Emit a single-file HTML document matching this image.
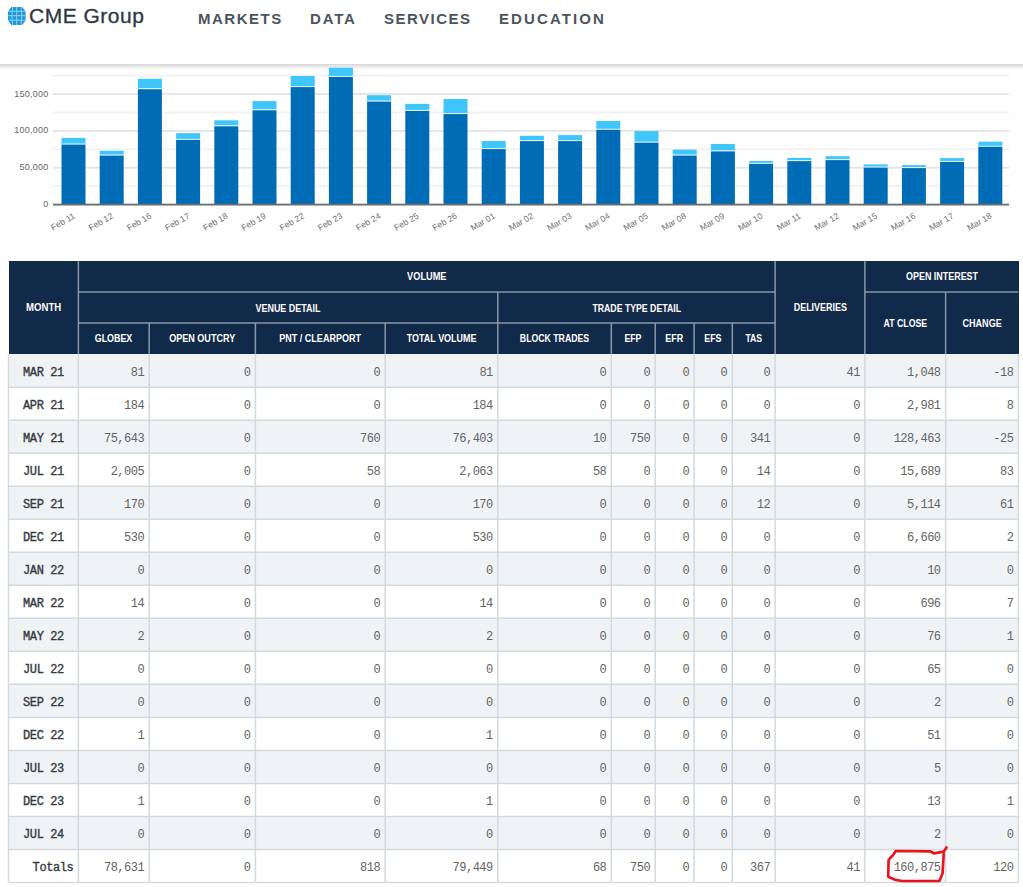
<!DOCTYPE html>
<html><head><meta charset="utf-8"><style>
html,body{margin:0;padding:0;background:#fff;width:1023px;height:887px;overflow:hidden;position:relative}
body{font-family:"Liberation Sans",sans-serif}
.r{position:absolute}
.shadow{position:absolute;left:0;top:64px;width:1023px;height:6px;background:linear-gradient(#d6d6d6,#e6e6e6 35%,#f8f8f8 75%,#fff)}
.logo{position:absolute;left:29px;top:3.8px;font-size:21px;color:#2f3a44;letter-spacing:0.5px;white-space:nowrap;-webkit-text-stroke:0.35px #2f3a44}
.globe{position:absolute;left:7.7px;top:7px}
.nav{position:absolute;top:10px;font-size:15px;font-weight:bold;color:#4b5560;white-space:nowrap}
.chart{position:absolute;left:0;top:60px}
.yl{font-size:9px;letter-spacing:0.25px;fill:#666;font-family:"Liberation Sans",sans-serif}
.xl{font-size:8.6px;fill:#707070;font-family:"Liberation Sans",sans-serif}
.ht{position:absolute;color:#fff;font-size:10.2px;font-weight:bold;text-align:center;white-space:nowrap;padding-top:1.3px;box-sizing:border-box}
.bt{position:absolute;font-family:"Liberation Mono",monospace;font-size:12px;letter-spacing:-0.5px;white-space:nowrap;box-sizing:border-box;padding-top:3px}
.bt.n{text-align:right;padding-right:5px;color:#636363}
.bt.m{text-align:center;font-weight:normal;color:#353a40;-webkit-text-stroke:0.35px #353a40;letter-spacing:-0.4px}
.bt.m.tot{text-align:right;padding-right:5px}
.circ{position:absolute;left:0;top:0}
</style></head><body>
<svg class="globe" width="19" height="19" viewBox="0 0 19 19"><defs><clipPath id="gc"><polygon points="3.2,0 14.4,0 17.6,4.7 17.6,13.3 14.4,18 3.2,18 0,13.3 0,4.7"/></clipPath><clipPath id="gc2"><circle cx="8.8" cy="9" r="10.6"/></clipPath></defs><g clip-path="url(#gc)"><g clip-path="url(#gc2)"><rect width="19" height="19" fill="#1b9ad7"/><g stroke="#9fd3f1" stroke-width="0.9" fill="none"><line x1="0" y1="4.3" x2="18" y2="4.3"/><line x1="0" y1="8.7" x2="18" y2="8.7"/><line x1="0" y1="13.2" x2="18" y2="13.2"/><path d="M8.7,0 L8.7,18"/><path d="M4.6,0 Q3,9 4.6,18"/><path d="M13,0 Q14.6,9 13,18"/></g></g></g></svg>
<div class="logo">CME Group</div>
<div class="nav" style="left:198px;letter-spacing:1.5px">MARKETS</div>
<div class="nav" style="left:310px;letter-spacing:1.8px">DATA</div>
<div class="nav" style="left:384px;letter-spacing:1.5px">SERVICES</div>
<div class="nav" style="left:499px;letter-spacing:2.1px">EDUCATION</div>
<div class="shadow"></div>
<svg class="chart" width="1023" height="190" viewBox="0 60 1023 190">
<rect x="53" y="185.27" width="956" height="1.8" fill="#f1f1f1"/>
<rect x="53" y="166.84" width="956" height="1.8" fill="#e3e3e3"/>
<rect x="53" y="148.41" width="956" height="1.8" fill="#f1f1f1"/>
<rect x="53" y="129.98" width="956" height="1.8" fill="#e3e3e3"/>
<rect x="53" y="111.55" width="956" height="1.8" fill="#f1f1f1"/>
<rect x="53" y="93.12" width="956" height="1.8" fill="#e3e3e3"/>
<rect x="53" y="74.69" width="956" height="1.8" fill="#f1f1f1"/>
<rect x="61.50" y="137.90" width="24" height="6.10" fill="#3ec6fd"/>
<rect x="61.50" y="143.50" width="24" height="1.1" fill="#e2f4fc"/>
<rect x="61.50" y="144.60" width="24" height="60.00" fill="#006cb5"/>
<rect x="99.70" y="150.80" width="24" height="4.20" fill="#3ec6fd"/>
<rect x="99.70" y="154.50" width="24" height="1.1" fill="#e2f4fc"/>
<rect x="99.70" y="155.60" width="24" height="49.00" fill="#006cb5"/>
<rect x="137.90" y="78.80" width="24" height="9.80" fill="#3ec6fd"/>
<rect x="137.90" y="88.10" width="24" height="1.1" fill="#e2f4fc"/>
<rect x="137.90" y="89.20" width="24" height="115.40" fill="#006cb5"/>
<rect x="176.10" y="133.20" width="24" height="6.10" fill="#3ec6fd"/>
<rect x="176.10" y="138.80" width="24" height="1.1" fill="#e2f4fc"/>
<rect x="176.10" y="139.90" width="24" height="64.70" fill="#006cb5"/>
<rect x="214.30" y="120.30" width="24" height="5.40" fill="#3ec6fd"/>
<rect x="214.30" y="125.20" width="24" height="1.1" fill="#e2f4fc"/>
<rect x="214.30" y="126.30" width="24" height="78.30" fill="#006cb5"/>
<rect x="252.50" y="101.10" width="24" height="8.60" fill="#3ec6fd"/>
<rect x="252.50" y="109.20" width="24" height="1.1" fill="#e2f4fc"/>
<rect x="252.50" y="110.30" width="24" height="94.30" fill="#006cb5"/>
<rect x="290.70" y="76.00" width="24" height="10.50" fill="#3ec6fd"/>
<rect x="290.70" y="86.00" width="24" height="1.1" fill="#e2f4fc"/>
<rect x="290.70" y="87.10" width="24" height="117.50" fill="#006cb5"/>
<rect x="328.90" y="67.70" width="24" height="8.70" fill="#3ec6fd"/>
<rect x="328.90" y="75.90" width="24" height="1.1" fill="#e2f4fc"/>
<rect x="328.90" y="77.00" width="24" height="127.60" fill="#006cb5"/>
<rect x="367.10" y="95.20" width="24" height="5.80" fill="#3ec6fd"/>
<rect x="367.10" y="100.50" width="24" height="1.1" fill="#e2f4fc"/>
<rect x="367.10" y="101.60" width="24" height="103.00" fill="#006cb5"/>
<rect x="405.30" y="103.90" width="24" height="6.50" fill="#3ec6fd"/>
<rect x="405.30" y="109.90" width="24" height="1.1" fill="#e2f4fc"/>
<rect x="405.30" y="111.00" width="24" height="93.60" fill="#006cb5"/>
<rect x="443.50" y="99.00" width="24" height="14.50" fill="#3ec6fd"/>
<rect x="443.50" y="113.00" width="24" height="1.1" fill="#e2f4fc"/>
<rect x="443.50" y="114.10" width="24" height="90.50" fill="#006cb5"/>
<rect x="481.70" y="141.00" width="24" height="7.50" fill="#3ec6fd"/>
<rect x="481.70" y="148.00" width="24" height="1.1" fill="#e2f4fc"/>
<rect x="481.70" y="149.10" width="24" height="55.50" fill="#006cb5"/>
<rect x="519.90" y="135.80" width="24" height="4.70" fill="#3ec6fd"/>
<rect x="519.90" y="140.00" width="24" height="1.1" fill="#e2f4fc"/>
<rect x="519.90" y="141.10" width="24" height="63.50" fill="#006cb5"/>
<rect x="558.10" y="135.10" width="24" height="5.40" fill="#3ec6fd"/>
<rect x="558.10" y="140.00" width="24" height="1.1" fill="#e2f4fc"/>
<rect x="558.10" y="141.10" width="24" height="63.50" fill="#006cb5"/>
<rect x="596.30" y="121.00" width="24" height="8.20" fill="#3ec6fd"/>
<rect x="596.30" y="128.70" width="24" height="1.1" fill="#e2f4fc"/>
<rect x="596.30" y="129.80" width="24" height="74.80" fill="#006cb5"/>
<rect x="634.50" y="131.10" width="24" height="11.00" fill="#3ec6fd"/>
<rect x="634.50" y="141.60" width="24" height="1.1" fill="#e2f4fc"/>
<rect x="634.50" y="142.70" width="24" height="61.90" fill="#006cb5"/>
<rect x="672.70" y="149.60" width="24" height="5.40" fill="#3ec6fd"/>
<rect x="672.70" y="154.50" width="24" height="1.1" fill="#e2f4fc"/>
<rect x="672.70" y="155.60" width="24" height="49.00" fill="#006cb5"/>
<rect x="710.90" y="144.00" width="24" height="6.80" fill="#3ec6fd"/>
<rect x="710.90" y="150.30" width="24" height="1.1" fill="#e2f4fc"/>
<rect x="710.90" y="151.40" width="24" height="53.20" fill="#006cb5"/>
<rect x="749.10" y="161.00" width="24" height="2.30" fill="#3ec6fd"/>
<rect x="749.10" y="162.80" width="24" height="1.1" fill="#e2f4fc"/>
<rect x="749.10" y="163.90" width="24" height="40.70" fill="#006cb5"/>
<rect x="787.30" y="157.90" width="24" height="2.60" fill="#3ec6fd"/>
<rect x="787.30" y="160.00" width="24" height="1.1" fill="#e2f4fc"/>
<rect x="787.30" y="161.10" width="24" height="43.50" fill="#006cb5"/>
<rect x="825.50" y="156.20" width="24" height="3.30" fill="#3ec6fd"/>
<rect x="825.50" y="159.00" width="24" height="1.1" fill="#e2f4fc"/>
<rect x="825.50" y="160.10" width="24" height="44.50" fill="#006cb5"/>
<rect x="863.70" y="164.40" width="24" height="2.60" fill="#3ec6fd"/>
<rect x="863.70" y="166.50" width="24" height="1.1" fill="#e2f4fc"/>
<rect x="863.70" y="167.60" width="24" height="37.00" fill="#006cb5"/>
<rect x="901.90" y="165.10" width="24" height="2.40" fill="#3ec6fd"/>
<rect x="901.90" y="167.00" width="24" height="1.1" fill="#e2f4fc"/>
<rect x="901.90" y="168.10" width="24" height="36.50" fill="#006cb5"/>
<rect x="940.10" y="158.10" width="24" height="3.30" fill="#3ec6fd"/>
<rect x="940.10" y="160.90" width="24" height="1.1" fill="#e2f4fc"/>
<rect x="940.10" y="162.00" width="24" height="42.60" fill="#006cb5"/>
<rect x="978.30" y="141.70" width="24" height="4.50" fill="#3ec6fd"/>
<rect x="978.30" y="145.70" width="24" height="1.1" fill="#e2f4fc"/>
<rect x="978.30" y="146.80" width="24" height="57.80" fill="#006cb5"/>
<rect x="53" y="203.70" width="956" height="1.8" fill="#6b6b6b"/>
<text x="48.5" y="207.10" text-anchor="end" class="yl">0</text>
<text x="48.5" y="170.24" text-anchor="end" class="yl">50,000</text>
<text x="48.5" y="133.38" text-anchor="end" class="yl">100,000</text>
<text x="48.5" y="96.52" text-anchor="end" class="yl">150,000</text>
<text transform="translate(75.70,217.60) rotate(-30)" text-anchor="end" class="xl">Feb 11</text>
<text transform="translate(113.90,217.60) rotate(-30)" text-anchor="end" class="xl">Feb 12</text>
<text transform="translate(152.10,217.60) rotate(-30)" text-anchor="end" class="xl">Feb 16</text>
<text transform="translate(190.30,217.60) rotate(-30)" text-anchor="end" class="xl">Feb 17</text>
<text transform="translate(228.50,217.60) rotate(-30)" text-anchor="end" class="xl">Feb 18</text>
<text transform="translate(266.70,217.60) rotate(-30)" text-anchor="end" class="xl">Feb 19</text>
<text transform="translate(304.90,217.60) rotate(-30)" text-anchor="end" class="xl">Feb 22</text>
<text transform="translate(343.10,217.60) rotate(-30)" text-anchor="end" class="xl">Feb 23</text>
<text transform="translate(381.30,217.60) rotate(-30)" text-anchor="end" class="xl">Feb 24</text>
<text transform="translate(419.50,217.60) rotate(-30)" text-anchor="end" class="xl">Feb 25</text>
<text transform="translate(457.70,217.60) rotate(-30)" text-anchor="end" class="xl">Feb 26</text>
<text transform="translate(495.90,217.60) rotate(-30)" text-anchor="end" class="xl">Mar 01</text>
<text transform="translate(534.10,217.60) rotate(-30)" text-anchor="end" class="xl">Mar 02</text>
<text transform="translate(572.30,217.60) rotate(-30)" text-anchor="end" class="xl">Mar 03</text>
<text transform="translate(610.50,217.60) rotate(-30)" text-anchor="end" class="xl">Mar 04</text>
<text transform="translate(648.70,217.60) rotate(-30)" text-anchor="end" class="xl">Mar 05</text>
<text transform="translate(686.90,217.60) rotate(-30)" text-anchor="end" class="xl">Mar 08</text>
<text transform="translate(725.10,217.60) rotate(-30)" text-anchor="end" class="xl">Mar 09</text>
<text transform="translate(763.30,217.60) rotate(-30)" text-anchor="end" class="xl">Mar 10</text>
<text transform="translate(801.50,217.60) rotate(-30)" text-anchor="end" class="xl">Mar 11</text>
<text transform="translate(839.70,217.60) rotate(-30)" text-anchor="end" class="xl">Mar 12</text>
<text transform="translate(877.90,217.60) rotate(-30)" text-anchor="end" class="xl">Mar 15</text>
<text transform="translate(916.10,217.60) rotate(-30)" text-anchor="end" class="xl">Mar 16</text>
<text transform="translate(954.30,217.60) rotate(-30)" text-anchor="end" class="xl">Mar 17</text>
<text transform="translate(992.50,217.60) rotate(-30)" text-anchor="end" class="xl">Mar 18</text>
</svg>
<div class="r" style="left:8.50px;top:261.00px;width:1010.40px;height:92.80px;background:#122a49"></div>
<div class="r" style="left:8.50px;top:353.80px;width:1009.90px;height:33.51px;background:#f0f3f6"></div>
<div class="r" style="left:8.50px;top:387.31px;width:1009.90px;height:33.01px;background:#ffffff"></div>
<div class="r" style="left:8.50px;top:420.31px;width:1009.90px;height:33.01px;background:#f0f3f6"></div>
<div class="r" style="left:8.50px;top:453.32px;width:1009.90px;height:33.01px;background:#ffffff"></div>
<div class="r" style="left:8.50px;top:486.33px;width:1009.90px;height:33.01px;background:#f0f3f6"></div>
<div class="r" style="left:8.50px;top:519.34px;width:1009.90px;height:33.01px;background:#ffffff"></div>
<div class="r" style="left:8.50px;top:552.34px;width:1009.90px;height:33.01px;background:#f0f3f6"></div>
<div class="r" style="left:8.50px;top:585.35px;width:1009.90px;height:33.01px;background:#ffffff"></div>
<div class="r" style="left:8.50px;top:618.36px;width:1009.90px;height:33.01px;background:#f0f3f6"></div>
<div class="r" style="left:8.50px;top:651.36px;width:1009.90px;height:33.01px;background:#ffffff"></div>
<div class="r" style="left:8.50px;top:684.37px;width:1009.90px;height:33.01px;background:#f0f3f6"></div>
<div class="r" style="left:8.50px;top:717.38px;width:1009.90px;height:33.01px;background:#ffffff"></div>
<div class="r" style="left:8.50px;top:750.38px;width:1009.90px;height:33.01px;background:#f0f3f6"></div>
<div class="r" style="left:8.50px;top:783.39px;width:1009.90px;height:33.01px;background:#ffffff"></div>
<div class="r" style="left:8.50px;top:816.40px;width:1009.90px;height:33.01px;background:#f0f3f6"></div>
<div class="r" style="left:8.50px;top:849.40px;width:1009.90px;height:33.01px;background:#ffffff"></div>
<svg class="lines" width="1023" height="887" style="position:absolute;left:0;top:0">
<line x1="8.50" y1="387.31" x2="1018.40" y2="387.31" stroke="#d3d9de" stroke-width="1.5"/>
<line x1="8.50" y1="420.31" x2="1018.40" y2="420.31" stroke="#d3d9de" stroke-width="1.5"/>
<line x1="8.50" y1="453.32" x2="1018.40" y2="453.32" stroke="#d3d9de" stroke-width="1.5"/>
<line x1="8.50" y1="486.33" x2="1018.40" y2="486.33" stroke="#d3d9de" stroke-width="1.5"/>
<line x1="8.50" y1="519.34" x2="1018.40" y2="519.34" stroke="#d3d9de" stroke-width="1.5"/>
<line x1="8.50" y1="552.34" x2="1018.40" y2="552.34" stroke="#d3d9de" stroke-width="1.5"/>
<line x1="8.50" y1="585.35" x2="1018.40" y2="585.35" stroke="#d3d9de" stroke-width="1.5"/>
<line x1="8.50" y1="618.36" x2="1018.40" y2="618.36" stroke="#d3d9de" stroke-width="1.5"/>
<line x1="8.50" y1="651.36" x2="1018.40" y2="651.36" stroke="#d3d9de" stroke-width="1.5"/>
<line x1="8.50" y1="684.37" x2="1018.40" y2="684.37" stroke="#d3d9de" stroke-width="1.5"/>
<line x1="8.50" y1="717.38" x2="1018.40" y2="717.38" stroke="#d3d9de" stroke-width="1.5"/>
<line x1="8.50" y1="750.38" x2="1018.40" y2="750.38" stroke="#d3d9de" stroke-width="1.5"/>
<line x1="8.50" y1="783.39" x2="1018.40" y2="783.39" stroke="#d3d9de" stroke-width="1.5"/>
<line x1="8.50" y1="816.40" x2="1018.40" y2="816.40" stroke="#d3d9de" stroke-width="1.5"/>
<line x1="8.50" y1="849.40" x2="1018.40" y2="849.40" stroke="#d3d9de" stroke-width="1.5"/>
<line x1="8.50" y1="882.41" x2="1018.40" y2="882.41" stroke="#d3d9de" stroke-width="1.5"/>
<line x1="8.50" y1="353.80" x2="8.50" y2="882.41" stroke="#d3d9de" stroke-width="1.5"/>
<line x1="78.40" y1="353.80" x2="78.40" y2="882.41" stroke="#d3d9de" stroke-width="1.5"/>
<line x1="149.20" y1="353.80" x2="149.20" y2="882.41" stroke="#d3d9de" stroke-width="1.5"/>
<line x1="255.40" y1="353.80" x2="255.40" y2="882.41" stroke="#d3d9de" stroke-width="1.5"/>
<line x1="385.20" y1="353.80" x2="385.20" y2="882.41" stroke="#d3d9de" stroke-width="1.5"/>
<line x1="497.80" y1="353.80" x2="497.80" y2="882.41" stroke="#d3d9de" stroke-width="1.5"/>
<line x1="611.30" y1="353.80" x2="611.30" y2="882.41" stroke="#d3d9de" stroke-width="1.5"/>
<line x1="655.20" y1="353.80" x2="655.20" y2="882.41" stroke="#d3d9de" stroke-width="1.5"/>
<line x1="694.10" y1="353.80" x2="694.10" y2="882.41" stroke="#d3d9de" stroke-width="1.5"/>
<line x1="732.30" y1="353.80" x2="732.30" y2="882.41" stroke="#d3d9de" stroke-width="1.5"/>
<line x1="775.10" y1="353.80" x2="775.10" y2="882.41" stroke="#d3d9de" stroke-width="1.5"/>
<line x1="864.90" y1="353.80" x2="864.90" y2="882.41" stroke="#d3d9de" stroke-width="1.5"/>
<line x1="945.60" y1="353.80" x2="945.60" y2="882.41" stroke="#d3d9de" stroke-width="1.5"/>
<line x1="1018.40" y1="353.80" x2="1018.40" y2="882.41" stroke="#d3d9de" stroke-width="1.5"/>
<line x1="78.40" y1="291.90" x2="775.10" y2="291.90" stroke="#8a97a6" stroke-width="1.5"/>
<line x1="864.90" y1="291.90" x2="1018.40" y2="291.90" stroke="#8a97a6" stroke-width="1.5"/>
<line x1="78.40" y1="323.00" x2="775.10" y2="323.00" stroke="#8a97a6" stroke-width="1.5"/>
<line x1="78.40" y1="261.00" x2="78.40" y2="353.80" stroke="#8a97a6" stroke-width="1.5"/>
<line x1="775.10" y1="261.00" x2="775.10" y2="353.80" stroke="#8a97a6" stroke-width="1.5"/>
<line x1="864.90" y1="261.00" x2="864.90" y2="353.80" stroke="#8a97a6" stroke-width="1.5"/>
<line x1="497.80" y1="291.90" x2="497.80" y2="353.80" stroke="#8a97a6" stroke-width="1.5"/>
<line x1="945.60" y1="291.90" x2="945.60" y2="353.80" stroke="#8a97a6" stroke-width="1.5"/>
<line x1="149.20" y1="323.00" x2="149.20" y2="353.80" stroke="#8a97a6" stroke-width="1.5"/>
<line x1="255.40" y1="323.00" x2="255.40" y2="353.80" stroke="#8a97a6" stroke-width="1.5"/>
<line x1="385.20" y1="323.00" x2="385.20" y2="353.80" stroke="#8a97a6" stroke-width="1.5"/>
<line x1="611.30" y1="323.00" x2="611.30" y2="353.80" stroke="#8a97a6" stroke-width="1.5"/>
<line x1="655.20" y1="323.00" x2="655.20" y2="353.80" stroke="#8a97a6" stroke-width="1.5"/>
<line x1="694.10" y1="323.00" x2="694.10" y2="353.80" stroke="#8a97a6" stroke-width="1.5"/>
<line x1="732.30" y1="323.00" x2="732.30" y2="353.80" stroke="#8a97a6" stroke-width="1.5"/>
</svg>
<div class="ht" style="left:8.50px;top:261.00px;width:69.90px;height:92.80px;line-height:92.80px"><span style="display:inline-block;transform:scaleX(0.941)">MONTH</span></div>
<div class="ht" style="left:78.40px;top:261.00px;width:696.70px;height:30.90px;line-height:30.90px"><span style="display:inline-block;transform:scaleX(0.903)">VOLUME</span></div>
<div class="ht" style="left:775.10px;top:261.00px;width:89.80px;height:92.80px;line-height:92.80px"><span style="display:inline-block;transform:scaleX(0.877)">DELIVERIES</span></div>
<div class="ht" style="left:864.90px;top:261.00px;width:153.50px;height:30.90px;line-height:30.90px"><span style="display:inline-block;transform:scaleX(0.876)">OPEN INTEREST</span></div>
<div class="ht" style="left:78.40px;top:291.90px;width:419.40px;height:31.10px;line-height:31.10px"><span style="display:inline-block;transform:scaleX(0.879)">VENUE DETAIL</span></div>
<div class="ht" style="left:497.80px;top:291.90px;width:277.30px;height:31.10px;line-height:31.10px"><span style="display:inline-block;transform:scaleX(0.857)">TRADE TYPE DETAIL</span></div>
<div class="ht" style="left:864.90px;top:291.90px;width:80.70px;height:61.90px;line-height:61.90px"><span style="display:inline-block;transform:scaleX(0.86)">AT CLOSE</span></div>
<div class="ht" style="left:945.60px;top:291.90px;width:72.80px;height:61.90px;line-height:61.90px"><span style="display:inline-block;transform:scaleX(0.891)">CHANGE</span></div>
<div class="ht" style="left:78.40px;top:323.00px;width:70.80px;height:30.80px;line-height:30.80px"><span style="display:inline-block;transform:scaleX(0.873)">GLOBEX</span></div>
<div class="ht" style="left:149.20px;top:323.00px;width:106.20px;height:30.80px;line-height:30.80px"><span style="display:inline-block;transform:scaleX(0.888)">OPEN OUTCRY</span></div>
<div class="ht" style="left:255.40px;top:323.00px;width:129.80px;height:30.80px;line-height:30.80px"><span style="display:inline-block;transform:scaleX(0.886)">PNT / CLEARPORT</span></div>
<div class="ht" style="left:385.20px;top:323.00px;width:112.60px;height:30.80px;line-height:30.80px"><span style="display:inline-block;transform:scaleX(0.881)">TOTAL VOLUME</span></div>
<div class="ht" style="left:497.80px;top:323.00px;width:113.50px;height:30.80px;line-height:30.80px"><span style="display:inline-block;transform:scaleX(0.856)">BLOCK TRADES</span></div>
<div class="ht" style="left:611.30px;top:323.00px;width:43.90px;height:30.80px;line-height:30.80px"><span style="display:inline-block;transform:scaleX(0.857)">EFP</span></div>
<div class="ht" style="left:655.20px;top:323.00px;width:38.90px;height:30.80px;line-height:30.80px"><span style="display:inline-block;transform:scaleX(0.877)">EFR</span></div>
<div class="ht" style="left:694.10px;top:323.00px;width:38.20px;height:30.80px;line-height:30.80px"><span style="display:inline-block;transform:scaleX(0.872)">EFS</span></div>
<div class="ht" style="left:732.30px;top:323.00px;width:42.80px;height:30.80px;line-height:30.80px"><span style="display:inline-block;transform:scaleX(0.85)">TAS</span></div>
<div class="bt m" style="left:8.50px;top:354.30px;width:69.90px;height:33.01px;line-height:33.01px">MAR 21</div>
<div class="bt n" style="left:78.40px;top:354.30px;width:70.80px;height:33.01px;line-height:33.01px">81</div>
<div class="bt n" style="left:149.20px;top:354.30px;width:106.20px;height:33.01px;line-height:33.01px">0</div>
<div class="bt n" style="left:255.40px;top:354.30px;width:129.80px;height:33.01px;line-height:33.01px">0</div>
<div class="bt n" style="left:385.20px;top:354.30px;width:112.60px;height:33.01px;line-height:33.01px">81</div>
<div class="bt n" style="left:497.80px;top:354.30px;width:113.50px;height:33.01px;line-height:33.01px">0</div>
<div class="bt n" style="left:611.30px;top:354.30px;width:43.90px;height:33.01px;line-height:33.01px">0</div>
<div class="bt n" style="left:655.20px;top:354.30px;width:38.90px;height:33.01px;line-height:33.01px">0</div>
<div class="bt n" style="left:694.10px;top:354.30px;width:38.20px;height:33.01px;line-height:33.01px">0</div>
<div class="bt n" style="left:732.30px;top:354.30px;width:42.80px;height:33.01px;line-height:33.01px">0</div>
<div class="bt n" style="left:775.10px;top:354.30px;width:89.80px;height:33.01px;line-height:33.01px">41</div>
<div class="bt n" style="left:864.90px;top:354.30px;width:80.70px;height:33.01px;line-height:33.01px">1,048</div>
<div class="bt n" style="left:945.60px;top:354.30px;width:72.80px;height:33.01px;line-height:33.01px">-18</div>
<div class="bt m" style="left:8.50px;top:387.31px;width:69.90px;height:33.01px;line-height:33.01px">APR 21</div>
<div class="bt n" style="left:78.40px;top:387.31px;width:70.80px;height:33.01px;line-height:33.01px">184</div>
<div class="bt n" style="left:149.20px;top:387.31px;width:106.20px;height:33.01px;line-height:33.01px">0</div>
<div class="bt n" style="left:255.40px;top:387.31px;width:129.80px;height:33.01px;line-height:33.01px">0</div>
<div class="bt n" style="left:385.20px;top:387.31px;width:112.60px;height:33.01px;line-height:33.01px">184</div>
<div class="bt n" style="left:497.80px;top:387.31px;width:113.50px;height:33.01px;line-height:33.01px">0</div>
<div class="bt n" style="left:611.30px;top:387.31px;width:43.90px;height:33.01px;line-height:33.01px">0</div>
<div class="bt n" style="left:655.20px;top:387.31px;width:38.90px;height:33.01px;line-height:33.01px">0</div>
<div class="bt n" style="left:694.10px;top:387.31px;width:38.20px;height:33.01px;line-height:33.01px">0</div>
<div class="bt n" style="left:732.30px;top:387.31px;width:42.80px;height:33.01px;line-height:33.01px">0</div>
<div class="bt n" style="left:775.10px;top:387.31px;width:89.80px;height:33.01px;line-height:33.01px">0</div>
<div class="bt n" style="left:864.90px;top:387.31px;width:80.70px;height:33.01px;line-height:33.01px">2,981</div>
<div class="bt n" style="left:945.60px;top:387.31px;width:72.80px;height:33.01px;line-height:33.01px">8</div>
<div class="bt m" style="left:8.50px;top:420.31px;width:69.90px;height:33.01px;line-height:33.01px">MAY 21</div>
<div class="bt n" style="left:78.40px;top:420.31px;width:70.80px;height:33.01px;line-height:33.01px">75,643</div>
<div class="bt n" style="left:149.20px;top:420.31px;width:106.20px;height:33.01px;line-height:33.01px">0</div>
<div class="bt n" style="left:255.40px;top:420.31px;width:129.80px;height:33.01px;line-height:33.01px">760</div>
<div class="bt n" style="left:385.20px;top:420.31px;width:112.60px;height:33.01px;line-height:33.01px">76,403</div>
<div class="bt n" style="left:497.80px;top:420.31px;width:113.50px;height:33.01px;line-height:33.01px">10</div>
<div class="bt n" style="left:611.30px;top:420.31px;width:43.90px;height:33.01px;line-height:33.01px">750</div>
<div class="bt n" style="left:655.20px;top:420.31px;width:38.90px;height:33.01px;line-height:33.01px">0</div>
<div class="bt n" style="left:694.10px;top:420.31px;width:38.20px;height:33.01px;line-height:33.01px">0</div>
<div class="bt n" style="left:732.30px;top:420.31px;width:42.80px;height:33.01px;line-height:33.01px">341</div>
<div class="bt n" style="left:775.10px;top:420.31px;width:89.80px;height:33.01px;line-height:33.01px">0</div>
<div class="bt n" style="left:864.90px;top:420.31px;width:80.70px;height:33.01px;line-height:33.01px">128,463</div>
<div class="bt n" style="left:945.60px;top:420.31px;width:72.80px;height:33.01px;line-height:33.01px">-25</div>
<div class="bt m" style="left:8.50px;top:453.32px;width:69.90px;height:33.01px;line-height:33.01px">JUL 21</div>
<div class="bt n" style="left:78.40px;top:453.32px;width:70.80px;height:33.01px;line-height:33.01px">2,005</div>
<div class="bt n" style="left:149.20px;top:453.32px;width:106.20px;height:33.01px;line-height:33.01px">0</div>
<div class="bt n" style="left:255.40px;top:453.32px;width:129.80px;height:33.01px;line-height:33.01px">58</div>
<div class="bt n" style="left:385.20px;top:453.32px;width:112.60px;height:33.01px;line-height:33.01px">2,063</div>
<div class="bt n" style="left:497.80px;top:453.32px;width:113.50px;height:33.01px;line-height:33.01px">58</div>
<div class="bt n" style="left:611.30px;top:453.32px;width:43.90px;height:33.01px;line-height:33.01px">0</div>
<div class="bt n" style="left:655.20px;top:453.32px;width:38.90px;height:33.01px;line-height:33.01px">0</div>
<div class="bt n" style="left:694.10px;top:453.32px;width:38.20px;height:33.01px;line-height:33.01px">0</div>
<div class="bt n" style="left:732.30px;top:453.32px;width:42.80px;height:33.01px;line-height:33.01px">14</div>
<div class="bt n" style="left:775.10px;top:453.32px;width:89.80px;height:33.01px;line-height:33.01px">0</div>
<div class="bt n" style="left:864.90px;top:453.32px;width:80.70px;height:33.01px;line-height:33.01px">15,689</div>
<div class="bt n" style="left:945.60px;top:453.32px;width:72.80px;height:33.01px;line-height:33.01px">83</div>
<div class="bt m" style="left:8.50px;top:486.33px;width:69.90px;height:33.01px;line-height:33.01px">SEP 21</div>
<div class="bt n" style="left:78.40px;top:486.33px;width:70.80px;height:33.01px;line-height:33.01px">170</div>
<div class="bt n" style="left:149.20px;top:486.33px;width:106.20px;height:33.01px;line-height:33.01px">0</div>
<div class="bt n" style="left:255.40px;top:486.33px;width:129.80px;height:33.01px;line-height:33.01px">0</div>
<div class="bt n" style="left:385.20px;top:486.33px;width:112.60px;height:33.01px;line-height:33.01px">170</div>
<div class="bt n" style="left:497.80px;top:486.33px;width:113.50px;height:33.01px;line-height:33.01px">0</div>
<div class="bt n" style="left:611.30px;top:486.33px;width:43.90px;height:33.01px;line-height:33.01px">0</div>
<div class="bt n" style="left:655.20px;top:486.33px;width:38.90px;height:33.01px;line-height:33.01px">0</div>
<div class="bt n" style="left:694.10px;top:486.33px;width:38.20px;height:33.01px;line-height:33.01px">0</div>
<div class="bt n" style="left:732.30px;top:486.33px;width:42.80px;height:33.01px;line-height:33.01px">12</div>
<div class="bt n" style="left:775.10px;top:486.33px;width:89.80px;height:33.01px;line-height:33.01px">0</div>
<div class="bt n" style="left:864.90px;top:486.33px;width:80.70px;height:33.01px;line-height:33.01px">5,114</div>
<div class="bt n" style="left:945.60px;top:486.33px;width:72.80px;height:33.01px;line-height:33.01px">61</div>
<div class="bt m" style="left:8.50px;top:519.34px;width:69.90px;height:33.01px;line-height:33.01px">DEC 21</div>
<div class="bt n" style="left:78.40px;top:519.34px;width:70.80px;height:33.01px;line-height:33.01px">530</div>
<div class="bt n" style="left:149.20px;top:519.34px;width:106.20px;height:33.01px;line-height:33.01px">0</div>
<div class="bt n" style="left:255.40px;top:519.34px;width:129.80px;height:33.01px;line-height:33.01px">0</div>
<div class="bt n" style="left:385.20px;top:519.34px;width:112.60px;height:33.01px;line-height:33.01px">530</div>
<div class="bt n" style="left:497.80px;top:519.34px;width:113.50px;height:33.01px;line-height:33.01px">0</div>
<div class="bt n" style="left:611.30px;top:519.34px;width:43.90px;height:33.01px;line-height:33.01px">0</div>
<div class="bt n" style="left:655.20px;top:519.34px;width:38.90px;height:33.01px;line-height:33.01px">0</div>
<div class="bt n" style="left:694.10px;top:519.34px;width:38.20px;height:33.01px;line-height:33.01px">0</div>
<div class="bt n" style="left:732.30px;top:519.34px;width:42.80px;height:33.01px;line-height:33.01px">0</div>
<div class="bt n" style="left:775.10px;top:519.34px;width:89.80px;height:33.01px;line-height:33.01px">0</div>
<div class="bt n" style="left:864.90px;top:519.34px;width:80.70px;height:33.01px;line-height:33.01px">6,660</div>
<div class="bt n" style="left:945.60px;top:519.34px;width:72.80px;height:33.01px;line-height:33.01px">2</div>
<div class="bt m" style="left:8.50px;top:552.34px;width:69.90px;height:33.01px;line-height:33.01px">JAN 22</div>
<div class="bt n" style="left:78.40px;top:552.34px;width:70.80px;height:33.01px;line-height:33.01px">0</div>
<div class="bt n" style="left:149.20px;top:552.34px;width:106.20px;height:33.01px;line-height:33.01px">0</div>
<div class="bt n" style="left:255.40px;top:552.34px;width:129.80px;height:33.01px;line-height:33.01px">0</div>
<div class="bt n" style="left:385.20px;top:552.34px;width:112.60px;height:33.01px;line-height:33.01px">0</div>
<div class="bt n" style="left:497.80px;top:552.34px;width:113.50px;height:33.01px;line-height:33.01px">0</div>
<div class="bt n" style="left:611.30px;top:552.34px;width:43.90px;height:33.01px;line-height:33.01px">0</div>
<div class="bt n" style="left:655.20px;top:552.34px;width:38.90px;height:33.01px;line-height:33.01px">0</div>
<div class="bt n" style="left:694.10px;top:552.34px;width:38.20px;height:33.01px;line-height:33.01px">0</div>
<div class="bt n" style="left:732.30px;top:552.34px;width:42.80px;height:33.01px;line-height:33.01px">0</div>
<div class="bt n" style="left:775.10px;top:552.34px;width:89.80px;height:33.01px;line-height:33.01px">0</div>
<div class="bt n" style="left:864.90px;top:552.34px;width:80.70px;height:33.01px;line-height:33.01px">10</div>
<div class="bt n" style="left:945.60px;top:552.34px;width:72.80px;height:33.01px;line-height:33.01px">0</div>
<div class="bt m" style="left:8.50px;top:585.35px;width:69.90px;height:33.01px;line-height:33.01px">MAR 22</div>
<div class="bt n" style="left:78.40px;top:585.35px;width:70.80px;height:33.01px;line-height:33.01px">14</div>
<div class="bt n" style="left:149.20px;top:585.35px;width:106.20px;height:33.01px;line-height:33.01px">0</div>
<div class="bt n" style="left:255.40px;top:585.35px;width:129.80px;height:33.01px;line-height:33.01px">0</div>
<div class="bt n" style="left:385.20px;top:585.35px;width:112.60px;height:33.01px;line-height:33.01px">14</div>
<div class="bt n" style="left:497.80px;top:585.35px;width:113.50px;height:33.01px;line-height:33.01px">0</div>
<div class="bt n" style="left:611.30px;top:585.35px;width:43.90px;height:33.01px;line-height:33.01px">0</div>
<div class="bt n" style="left:655.20px;top:585.35px;width:38.90px;height:33.01px;line-height:33.01px">0</div>
<div class="bt n" style="left:694.10px;top:585.35px;width:38.20px;height:33.01px;line-height:33.01px">0</div>
<div class="bt n" style="left:732.30px;top:585.35px;width:42.80px;height:33.01px;line-height:33.01px">0</div>
<div class="bt n" style="left:775.10px;top:585.35px;width:89.80px;height:33.01px;line-height:33.01px">0</div>
<div class="bt n" style="left:864.90px;top:585.35px;width:80.70px;height:33.01px;line-height:33.01px">696</div>
<div class="bt n" style="left:945.60px;top:585.35px;width:72.80px;height:33.01px;line-height:33.01px">7</div>
<div class="bt m" style="left:8.50px;top:618.36px;width:69.90px;height:33.01px;line-height:33.01px">MAY 22</div>
<div class="bt n" style="left:78.40px;top:618.36px;width:70.80px;height:33.01px;line-height:33.01px">2</div>
<div class="bt n" style="left:149.20px;top:618.36px;width:106.20px;height:33.01px;line-height:33.01px">0</div>
<div class="bt n" style="left:255.40px;top:618.36px;width:129.80px;height:33.01px;line-height:33.01px">0</div>
<div class="bt n" style="left:385.20px;top:618.36px;width:112.60px;height:33.01px;line-height:33.01px">2</div>
<div class="bt n" style="left:497.80px;top:618.36px;width:113.50px;height:33.01px;line-height:33.01px">0</div>
<div class="bt n" style="left:611.30px;top:618.36px;width:43.90px;height:33.01px;line-height:33.01px">0</div>
<div class="bt n" style="left:655.20px;top:618.36px;width:38.90px;height:33.01px;line-height:33.01px">0</div>
<div class="bt n" style="left:694.10px;top:618.36px;width:38.20px;height:33.01px;line-height:33.01px">0</div>
<div class="bt n" style="left:732.30px;top:618.36px;width:42.80px;height:33.01px;line-height:33.01px">0</div>
<div class="bt n" style="left:775.10px;top:618.36px;width:89.80px;height:33.01px;line-height:33.01px">0</div>
<div class="bt n" style="left:864.90px;top:618.36px;width:80.70px;height:33.01px;line-height:33.01px">76</div>
<div class="bt n" style="left:945.60px;top:618.36px;width:72.80px;height:33.01px;line-height:33.01px">1</div>
<div class="bt m" style="left:8.50px;top:651.36px;width:69.90px;height:33.01px;line-height:33.01px">JUL 22</div>
<div class="bt n" style="left:78.40px;top:651.36px;width:70.80px;height:33.01px;line-height:33.01px">0</div>
<div class="bt n" style="left:149.20px;top:651.36px;width:106.20px;height:33.01px;line-height:33.01px">0</div>
<div class="bt n" style="left:255.40px;top:651.36px;width:129.80px;height:33.01px;line-height:33.01px">0</div>
<div class="bt n" style="left:385.20px;top:651.36px;width:112.60px;height:33.01px;line-height:33.01px">0</div>
<div class="bt n" style="left:497.80px;top:651.36px;width:113.50px;height:33.01px;line-height:33.01px">0</div>
<div class="bt n" style="left:611.30px;top:651.36px;width:43.90px;height:33.01px;line-height:33.01px">0</div>
<div class="bt n" style="left:655.20px;top:651.36px;width:38.90px;height:33.01px;line-height:33.01px">0</div>
<div class="bt n" style="left:694.10px;top:651.36px;width:38.20px;height:33.01px;line-height:33.01px">0</div>
<div class="bt n" style="left:732.30px;top:651.36px;width:42.80px;height:33.01px;line-height:33.01px">0</div>
<div class="bt n" style="left:775.10px;top:651.36px;width:89.80px;height:33.01px;line-height:33.01px">0</div>
<div class="bt n" style="left:864.90px;top:651.36px;width:80.70px;height:33.01px;line-height:33.01px">65</div>
<div class="bt n" style="left:945.60px;top:651.36px;width:72.80px;height:33.01px;line-height:33.01px">0</div>
<div class="bt m" style="left:8.50px;top:684.37px;width:69.90px;height:33.01px;line-height:33.01px">SEP 22</div>
<div class="bt n" style="left:78.40px;top:684.37px;width:70.80px;height:33.01px;line-height:33.01px">0</div>
<div class="bt n" style="left:149.20px;top:684.37px;width:106.20px;height:33.01px;line-height:33.01px">0</div>
<div class="bt n" style="left:255.40px;top:684.37px;width:129.80px;height:33.01px;line-height:33.01px">0</div>
<div class="bt n" style="left:385.20px;top:684.37px;width:112.60px;height:33.01px;line-height:33.01px">0</div>
<div class="bt n" style="left:497.80px;top:684.37px;width:113.50px;height:33.01px;line-height:33.01px">0</div>
<div class="bt n" style="left:611.30px;top:684.37px;width:43.90px;height:33.01px;line-height:33.01px">0</div>
<div class="bt n" style="left:655.20px;top:684.37px;width:38.90px;height:33.01px;line-height:33.01px">0</div>
<div class="bt n" style="left:694.10px;top:684.37px;width:38.20px;height:33.01px;line-height:33.01px">0</div>
<div class="bt n" style="left:732.30px;top:684.37px;width:42.80px;height:33.01px;line-height:33.01px">0</div>
<div class="bt n" style="left:775.10px;top:684.37px;width:89.80px;height:33.01px;line-height:33.01px">0</div>
<div class="bt n" style="left:864.90px;top:684.37px;width:80.70px;height:33.01px;line-height:33.01px">2</div>
<div class="bt n" style="left:945.60px;top:684.37px;width:72.80px;height:33.01px;line-height:33.01px">0</div>
<div class="bt m" style="left:8.50px;top:717.38px;width:69.90px;height:33.01px;line-height:33.01px">DEC 22</div>
<div class="bt n" style="left:78.40px;top:717.38px;width:70.80px;height:33.01px;line-height:33.01px">1</div>
<div class="bt n" style="left:149.20px;top:717.38px;width:106.20px;height:33.01px;line-height:33.01px">0</div>
<div class="bt n" style="left:255.40px;top:717.38px;width:129.80px;height:33.01px;line-height:33.01px">0</div>
<div class="bt n" style="left:385.20px;top:717.38px;width:112.60px;height:33.01px;line-height:33.01px">1</div>
<div class="bt n" style="left:497.80px;top:717.38px;width:113.50px;height:33.01px;line-height:33.01px">0</div>
<div class="bt n" style="left:611.30px;top:717.38px;width:43.90px;height:33.01px;line-height:33.01px">0</div>
<div class="bt n" style="left:655.20px;top:717.38px;width:38.90px;height:33.01px;line-height:33.01px">0</div>
<div class="bt n" style="left:694.10px;top:717.38px;width:38.20px;height:33.01px;line-height:33.01px">0</div>
<div class="bt n" style="left:732.30px;top:717.38px;width:42.80px;height:33.01px;line-height:33.01px">0</div>
<div class="bt n" style="left:775.10px;top:717.38px;width:89.80px;height:33.01px;line-height:33.01px">0</div>
<div class="bt n" style="left:864.90px;top:717.38px;width:80.70px;height:33.01px;line-height:33.01px">51</div>
<div class="bt n" style="left:945.60px;top:717.38px;width:72.80px;height:33.01px;line-height:33.01px">0</div>
<div class="bt m" style="left:8.50px;top:750.38px;width:69.90px;height:33.01px;line-height:33.01px">JUL 23</div>
<div class="bt n" style="left:78.40px;top:750.38px;width:70.80px;height:33.01px;line-height:33.01px">0</div>
<div class="bt n" style="left:149.20px;top:750.38px;width:106.20px;height:33.01px;line-height:33.01px">0</div>
<div class="bt n" style="left:255.40px;top:750.38px;width:129.80px;height:33.01px;line-height:33.01px">0</div>
<div class="bt n" style="left:385.20px;top:750.38px;width:112.60px;height:33.01px;line-height:33.01px">0</div>
<div class="bt n" style="left:497.80px;top:750.38px;width:113.50px;height:33.01px;line-height:33.01px">0</div>
<div class="bt n" style="left:611.30px;top:750.38px;width:43.90px;height:33.01px;line-height:33.01px">0</div>
<div class="bt n" style="left:655.20px;top:750.38px;width:38.90px;height:33.01px;line-height:33.01px">0</div>
<div class="bt n" style="left:694.10px;top:750.38px;width:38.20px;height:33.01px;line-height:33.01px">0</div>
<div class="bt n" style="left:732.30px;top:750.38px;width:42.80px;height:33.01px;line-height:33.01px">0</div>
<div class="bt n" style="left:775.10px;top:750.38px;width:89.80px;height:33.01px;line-height:33.01px">0</div>
<div class="bt n" style="left:864.90px;top:750.38px;width:80.70px;height:33.01px;line-height:33.01px">5</div>
<div class="bt n" style="left:945.60px;top:750.38px;width:72.80px;height:33.01px;line-height:33.01px">0</div>
<div class="bt m" style="left:8.50px;top:783.39px;width:69.90px;height:33.01px;line-height:33.01px">DEC 23</div>
<div class="bt n" style="left:78.40px;top:783.39px;width:70.80px;height:33.01px;line-height:33.01px">1</div>
<div class="bt n" style="left:149.20px;top:783.39px;width:106.20px;height:33.01px;line-height:33.01px">0</div>
<div class="bt n" style="left:255.40px;top:783.39px;width:129.80px;height:33.01px;line-height:33.01px">0</div>
<div class="bt n" style="left:385.20px;top:783.39px;width:112.60px;height:33.01px;line-height:33.01px">1</div>
<div class="bt n" style="left:497.80px;top:783.39px;width:113.50px;height:33.01px;line-height:33.01px">0</div>
<div class="bt n" style="left:611.30px;top:783.39px;width:43.90px;height:33.01px;line-height:33.01px">0</div>
<div class="bt n" style="left:655.20px;top:783.39px;width:38.90px;height:33.01px;line-height:33.01px">0</div>
<div class="bt n" style="left:694.10px;top:783.39px;width:38.20px;height:33.01px;line-height:33.01px">0</div>
<div class="bt n" style="left:732.30px;top:783.39px;width:42.80px;height:33.01px;line-height:33.01px">0</div>
<div class="bt n" style="left:775.10px;top:783.39px;width:89.80px;height:33.01px;line-height:33.01px">0</div>
<div class="bt n" style="left:864.90px;top:783.39px;width:80.70px;height:33.01px;line-height:33.01px">13</div>
<div class="bt n" style="left:945.60px;top:783.39px;width:72.80px;height:33.01px;line-height:33.01px">1</div>
<div class="bt m" style="left:8.50px;top:816.40px;width:69.90px;height:33.01px;line-height:33.01px">JUL 24</div>
<div class="bt n" style="left:78.40px;top:816.40px;width:70.80px;height:33.01px;line-height:33.01px">0</div>
<div class="bt n" style="left:149.20px;top:816.40px;width:106.20px;height:33.01px;line-height:33.01px">0</div>
<div class="bt n" style="left:255.40px;top:816.40px;width:129.80px;height:33.01px;line-height:33.01px">0</div>
<div class="bt n" style="left:385.20px;top:816.40px;width:112.60px;height:33.01px;line-height:33.01px">0</div>
<div class="bt n" style="left:497.80px;top:816.40px;width:113.50px;height:33.01px;line-height:33.01px">0</div>
<div class="bt n" style="left:611.30px;top:816.40px;width:43.90px;height:33.01px;line-height:33.01px">0</div>
<div class="bt n" style="left:655.20px;top:816.40px;width:38.90px;height:33.01px;line-height:33.01px">0</div>
<div class="bt n" style="left:694.10px;top:816.40px;width:38.20px;height:33.01px;line-height:33.01px">0</div>
<div class="bt n" style="left:732.30px;top:816.40px;width:42.80px;height:33.01px;line-height:33.01px">0</div>
<div class="bt n" style="left:775.10px;top:816.40px;width:89.80px;height:33.01px;line-height:33.01px">0</div>
<div class="bt n" style="left:864.90px;top:816.40px;width:80.70px;height:33.01px;line-height:33.01px">2</div>
<div class="bt n" style="left:945.60px;top:816.40px;width:72.80px;height:33.01px;line-height:33.01px">0</div>
<div class="bt m tot" style="left:8.50px;top:849.40px;width:69.90px;height:33.01px;line-height:33.01px">Totals</div>
<div class="bt n" style="left:78.40px;top:849.40px;width:70.80px;height:33.01px;line-height:33.01px">78,631</div>
<div class="bt n" style="left:149.20px;top:849.40px;width:106.20px;height:33.01px;line-height:33.01px">0</div>
<div class="bt n" style="left:255.40px;top:849.40px;width:129.80px;height:33.01px;line-height:33.01px">818</div>
<div class="bt n" style="left:385.20px;top:849.40px;width:112.60px;height:33.01px;line-height:33.01px">79,449</div>
<div class="bt n" style="left:497.80px;top:849.40px;width:113.50px;height:33.01px;line-height:33.01px">68</div>
<div class="bt n" style="left:611.30px;top:849.40px;width:43.90px;height:33.01px;line-height:33.01px">750</div>
<div class="bt n" style="left:655.20px;top:849.40px;width:38.90px;height:33.01px;line-height:33.01px">0</div>
<div class="bt n" style="left:694.10px;top:849.40px;width:38.20px;height:33.01px;line-height:33.01px">0</div>
<div class="bt n" style="left:732.30px;top:849.40px;width:42.80px;height:33.01px;line-height:33.01px">367</div>
<div class="bt n" style="left:775.10px;top:849.40px;width:89.80px;height:33.01px;line-height:33.01px">41</div>
<div class="bt n" style="left:864.90px;top:849.40px;width:80.70px;height:33.01px;line-height:33.01px">160,875</div>
<div class="bt n" style="left:945.60px;top:849.40px;width:72.80px;height:33.01px;line-height:33.01px">120</div>
<svg class="circ" width="1023" height="887"><path d="M946.5,847.4 L943.7,851.7 L933.9,853.3 L930,851.3 L895.6,851 L893.3,854.9 L890.2,858 L888.6,860.3 L888.2,876.7 L895.6,879.9 L901.9,881 L939.4,881 L942.5,873.6 L943.7,854" fill="none" stroke="#e8141e" stroke-width="2.7" stroke-linejoin="round" stroke-linecap="round"/></svg>
</body></html>
